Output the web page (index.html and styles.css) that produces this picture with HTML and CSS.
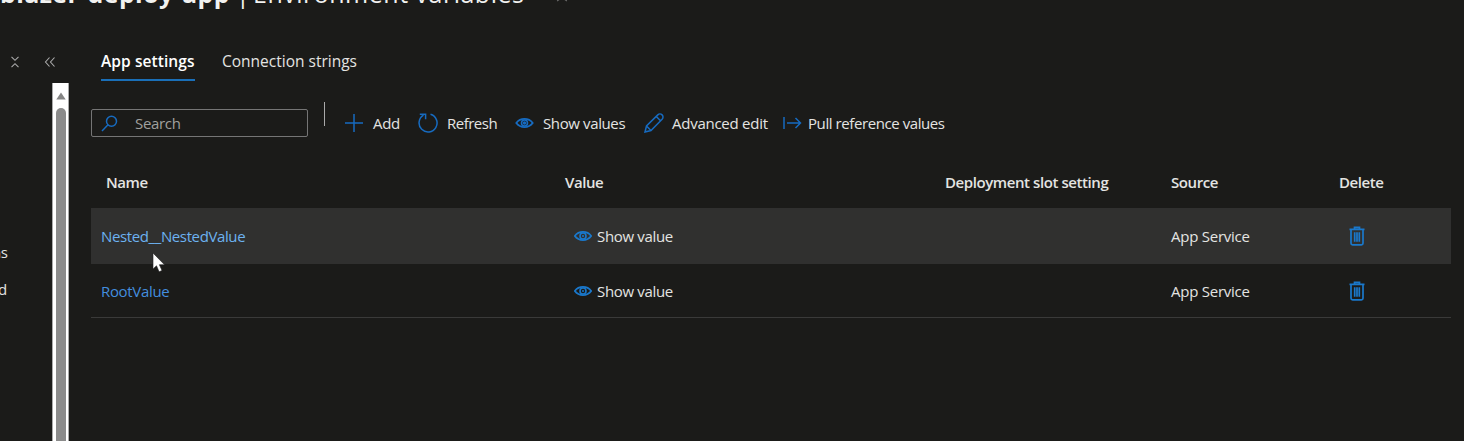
FILE: index.html
```html
<!DOCTYPE html>
<html lang="en">
<head>
<meta charset="utf-8">
<title>Environment variables</title>
<link rel="stylesheet" href="styles.css">
</head>
<body>
<svg class="defs" width="0" height="0">
  <symbol id="eye" viewBox="0 0 18 12"><path d="M.8 6C4.8.6 13.2.6 17.2 6 13.2 11.4 4.8 11.4.8 6Z" fill="none" stroke="currentColor" stroke-width="1.8"/><circle cx="9" cy="6" r="3" fill="none" stroke="currentColor" stroke-width="1.6"/><circle cx="9" cy="6" r="1" fill="currentColor"/></symbol>
  <symbol id="trash" viewBox="0 0 16 20"><path d="M.5 3.3h15M5.500 3V1.300h5V3M2 4v13.200q0 1.600 1.600 1.600h8.800q1.600 0 1.600-1.600V4M5.700 6.200v9.600M8 6.200v9.600M10.300 6.200v9.600" fill="none" stroke="currentColor" stroke-width="1.700"/></symbol>
</svg>
<header class="title"><b class="app">blazer-deploy-app</b><span class="bar">|</span><span class="page">Environment variables</span><svg class="star" width="16" height="16" viewBox="0 0 16 16"><path d="M8 1l2 5h5l-4 3.500 1.700 5.500L8 12l-4.700 3L5 9.500 1 6h5Z"/></svg></header>
<div class="shell">
  <aside class="side">
    <div class="tools">
      <svg width="10" height="12" viewBox="0 0 10 12"><path d="M1.5.8 5 4.3 8.5.8M1.5 11.200 5 7.700 8.500 11.200"/></svg>
      <svg width="12" height="12" viewBox="0 0 12 12"><path d="M5.500 1.500 1.500 6l4 4.500M10.500 1.500 6.500 6l4 4.500"/></svg>
    </div>
    <span class="frag first">ns</span>
    <span class="frag second">d</span>
  </aside>
  <div class="scroll"><svg width="10" height="8" viewBox="0 0 10 8"><path d="M5 .5 9.700 7.500H.3Z" fill="#858585"/></svg><div class="thumb"></div></div>
  <main class="main">
    <nav class="tabs"><span class="tab active">App settings</span><span class="tab conn">Connection strings</span></nav>
    <div class="toolbar">
      <div class="search"><svg width="17" height="17" viewBox="0 0 17 17"><circle cx="10.500" cy="6.200" r="5" /><path d="M7 9.800 1 16"/></svg><span>Search</span></div>
      <i class="divider"></i>
      <div class="cmd add"><svg width="20" height="20" viewBox="0 0 20 20"><path d="M10 1v18M1 10h18"/></svg><span>Add</span></div>
      <div class="cmd refresh"><svg width="20" height="20" viewBox="0 0 20 20"><path d="M12.500 1.300A9 9 0 1 1 5.500 2.200M1.800 1.300H7.600V6.300"/></svg><span>Refresh</span></div>
      <div class="cmd show"><svg width="19" height="12"><use href="#eye"/></svg><span>Show values</span></div>
      <div class="cmd edit"><svg width="20" height="20" viewBox="0 0 20 20"><path d="M1 19l1.500-6L13.800 1.900a2.700 2.700 0 0 1 4.300 4.300L7 17.500ZM12.300 3.500l4.200 4.200M2.500 13l4.500 4.500"/></svg><span>Advanced edit</span></div>
      <div class="cmd pull"><svg width="19" height="14" viewBox="0 0 19 14"><path d="M1 1v12M4 7h13.500M12.500 2l5 5-5 5"/></svg><span>Pull reference values</span></div>
    </div>
    <section class="table">
      <div class="row head"><span>Name</span><span>Value</span><span>Deployment slot setting</span><span>Source</span><span>Delete</span></div>
      <div class="row hover"><a class="nested">Nested__NestedValue</a><span class="val"><svg width="18" height="12"><use href="#eye"/></svg><span>Show value</span></span><span></span><span class="service">App Service</span><svg class="trash" width="16" height="20"><use href="#trash"/></svg></div>
      <div class="row last"><a class="root">RootValue</a><span class="val"><svg width="18" height="12"><use href="#eye"/></svg><span>Show value</span></span><span></span><span class="service">App Service</span><svg class="trash" width="16" height="20"><use href="#trash"/></svg></div>
    </section>
  </main>
</div>
<svg class="cursor" width="14" height="21" viewBox="0 0 14 21"><path d="M1 1v16l3.500-3.200 2.600 6 2.900-1.300-2.600-5.800H12.500Z" fill="#fff" stroke="#222" stroke-width=".6"/></svg>
</body>
</html>
```
FILE: styles.css
```css
* { box-sizing: border-box; }
body { margin: 0; width: 1464px; height: 441px; overflow: hidden; background: #1b1b19; color: #e4e4e2; font: 15px/20px "Open Sans", "Noto Sans", sans-serif; letter-spacing: -.33px; position: relative; }
.defs { position: absolute; }
svg { flex: none; display: block; }
span, a, b { white-space: nowrap; }
.title { display: flex; height: 40px; font-size: 25px; line-height: 34px; color: #f2f2f0; }
.title > * { margin-top: -24px; }
.app { width: 236px; font-weight: 700; letter-spacing: .38px; }
.bar { width: 17px; }
.page { width: 301px; letter-spacing: .5px; }
.title .star { margin-top: -14px; fill: none; stroke: #666; }
.shell { display: flex; height: 401px; }
.side { width: 52px; display: flex; flex-direction: column; }
.tools { display: flex; padding: 16px 0 0 10px; gap: 24px; height: 202px; }
.tools svg { fill: none; stroke: #aaa; stroke-width: 1.1; }
.frag { height: 37px; }
.side .first { margin-left: -8px; }
.side .second { margin-left: -2px; }
.scroll { width: 17px; margin-top: 43px; background: #fff; border: solid #aaa; border-width: 0 1px; display: flex; flex-direction: column; align-items: center; padding-top: 9px; gap: 8px; }
.thumb { width: 10px; flex: 1; background: #8b8b8b; border-radius: 5px 5px 0 0; }
.main { flex: 1; padding: 11px 13px 0 22px; }
.tabs { display: flex; padding-left: 10px; gap: 27px; height: 58px; font-size: 15.5px; letter-spacing: 0; }
.tab { height: 30px; }
.active { width: 94px; font-weight: 600; letter-spacing: .08px; color: #fff; border-bottom: 2px solid #1a6fb8; }
.toolbar { display: flex; align-items: center; height: 28px; }
.toolbar svg { fill: none; stroke: #176bc0; stroke-width: 1.5; color: #176bc0; }
.search { display: flex; align-items: center; width: 217px; height: 28px; border: 1px solid #757575; border-radius: 2px; padding-left: 9px; gap: 17px; color: #a0a09e; }
.divider { width: 1px; height: 24px; margin: -19px 19px 0 16px; background: #aaa; }
.cmd { display: flex; align-items: center; }
.add { width: 74px; gap: 9px; }
.refresh { width: 97px; gap: 9px; letter-spacing: -.5px; }
.show { width: 129px; gap: 9px; letter-spacing: -.38px; }
.edit { width: 139px; gap: 8px; letter-spacing: -.25px; }
.pull { gap: 6px; letter-spacing: -.42px; }
.table { padding-top: 21px; }
.row { display: grid; grid-template-columns: 473px 380px 217px 178px 1fr; align-items: center; height: 56px; padding-left: 10px; }
.head { height: 50px; padding-bottom: 2px; font-weight: 600; letter-spacing: -.42px; padding-left: 15px; grid-template-columns: 459px 380px 226px 168px 1fr; }
.hover { background: #30302f; }
.last { height: 54px; border-bottom: 1px solid #3a3a39; }
.val { display: flex; align-items: center; gap: 5px; }
.service { letter-spacing: -.25px; }
.row svg { color: #1a78cb; }
.nested { color: #6cb2f1; letter-spacing: -.38px; }
.root { color: #438edf; }
.cursor { position: absolute; left: 152px; top: 252px; }
```
